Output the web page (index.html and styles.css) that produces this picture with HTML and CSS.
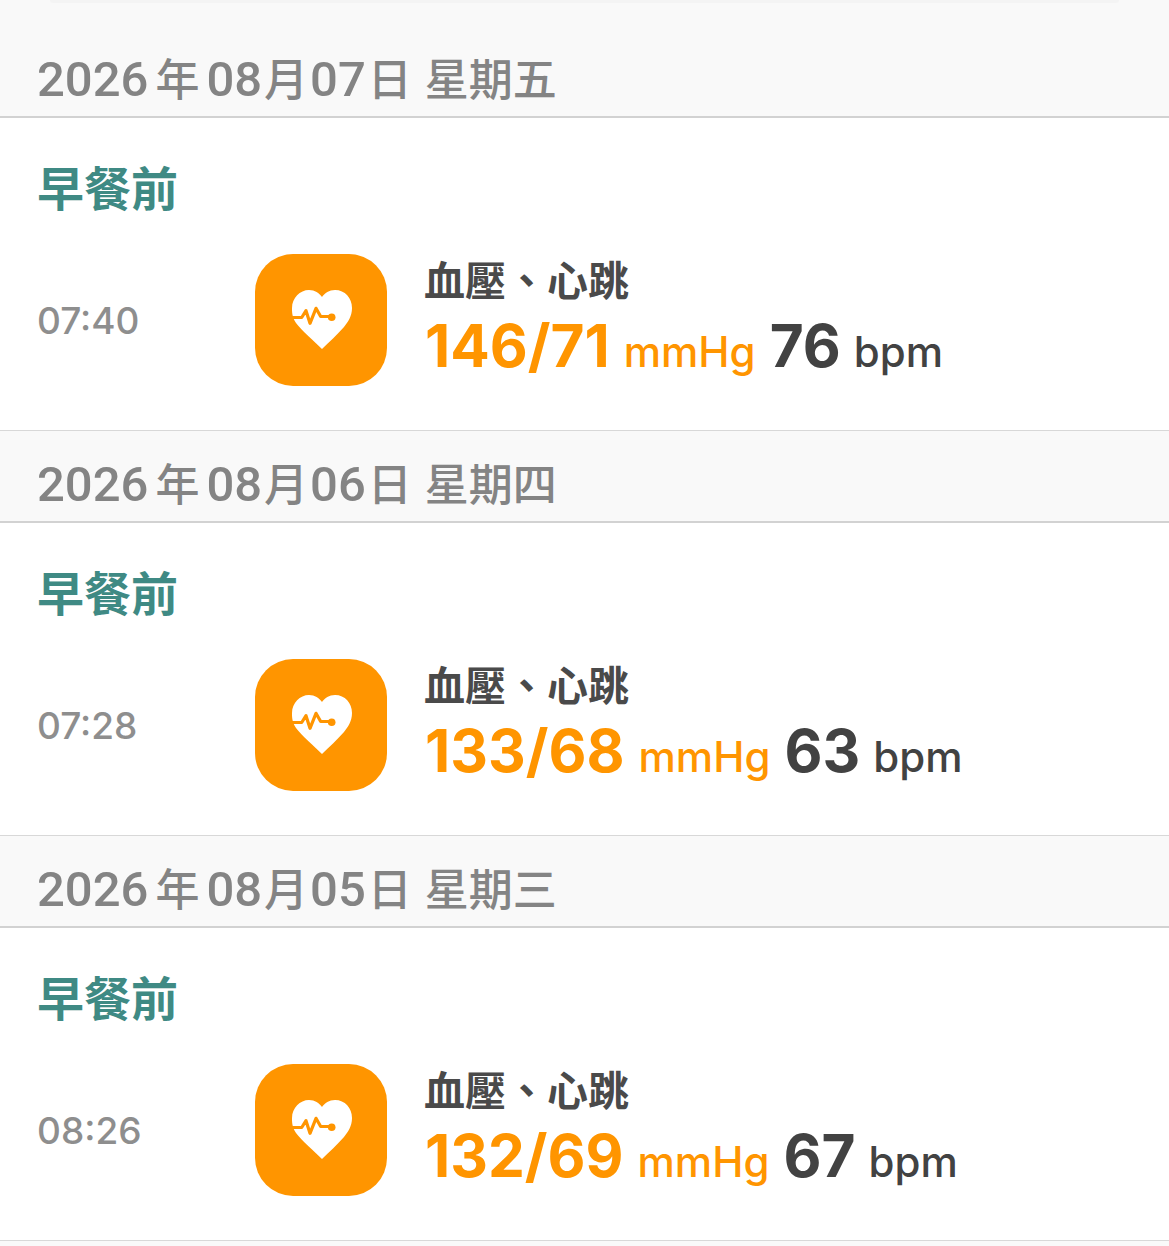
FILE: index.html
```html
<!DOCTYPE html>
<html lang="zh-Hant">
<head>
    <meta charset="UTF-8">
    <title>血壓、心跳</title>
    <link rel="stylesheet" href="styles.css">
</head>
<body>
    <svg class="sprite" width="0" height="0">
        <symbol id="heart" viewBox="0 0 132 132">
            <path fill="#fff" d="M67 95C60 88 46 76 41 69C37 63 37 58 37 54C37 44 45 36 54 36C60 36 64 39 67 43C70 39 74 36 80 36C90 36 97 44 97 54C97 62 93 68 89 73C82 81 74 88 67 95Z"/>
            <path fill="none" stroke="#ff9500" stroke-width="3.2" stroke-linejoin="round" stroke-linecap="round" d="M36 63.5H46.7L51 56.7L55 69.3L61 54.3L65.7 62.5H75"/>
            <circle fill="#ff9500" cx="76.7" cy="63.3" r="3.8"/>
        </symbol>
    </svg>

    <div class="date first">2026<span class="year">年</span>08<span class="cjk">月</span>07<span class="cjk">日</span><span class="week">星期五</span></div>
    <section class="record">
        <h2>早餐前</h2>
        <div class="row">
            <span class="time">07:40</span>
            <svg class="icon"><use href="#heart"/></svg>
            <div class="info">
                <div class="title">血壓、心跳</div>
                <div class="values"><b class="bp">146/71</b><span class="unit bp">mmHg</span><b>76</b><span class="unit">bpm</span></div>
            </div>
        </div>
    </section>

    <div class="date">2026<span class="year">年</span>08<span class="cjk">月</span>06<span class="cjk">日</span><span class="week">星期四</span></div>
    <section class="record">
        <h2>早餐前</h2>
        <div class="row">
            <span class="time">07:28</span>
            <svg class="icon"><use href="#heart"/></svg>
            <div class="info">
                <div class="title">血壓、心跳</div>
                <div class="values"><b class="bp">133/68</b><span class="unit bp">mmHg</span><b>63</b><span class="unit">bpm</span></div>
            </div>
        </div>
    </section>

    <div class="date">2026<span class="year">年</span>08<span class="cjk">月</span>05<span class="cjk">日</span><span class="week">星期三</span></div>
    <section class="record">
        <h2>早餐前</h2>
        <div class="row">
            <span class="time">08:26</span>
            <svg class="icon"><use href="#heart"/></svg>
            <div class="info">
                <div class="title">血壓、心跳</div>
                <div class="values"><b class="bp">132/69</b><span class="unit bp">mmHg</span><b>67</b><span class="unit">bpm</span></div>
            </div>
        </div>
    </section>
</body>
</html>
```

FILE: styles.css
```css
body {
    margin: 0;
    background-color: #f9f9f9;
    font-family: "Inter", "Noto Sans CJK TC", sans-serif;
    overflow: hidden;
}
.sprite {
    position: absolute;
}
.date {
    background-color: #f9f9f9;
    border-bottom: 2px solid #d2d2d2;
    color: #848484;
    font-family: "Roboto", "Noto Sans CJK TC", sans-serif;
    font-size: 49px;
    font-weight: 500;
    line-height: 50px;
    height: 50px;
    padding: 29px 0 11px 37px;
    white-space: nowrap;
}
.date.first {
    height: 105px;
    padding-top: 0;
}
/* thin edge of whatever scrolled off above the list */
.date.first::before {
    content: "";
    display: block;
    height: 3px;
    margin: 0 50px 52px 13px;
    background-color: #f4f4f4;
    border-radius: 0 0 3px 3px;
}
.year, .cjk, .week {
    font-size: 44px;
}
.year {
    margin: 0 7px 0 7px;
}
.cjk {
    margin: 0 2px;
}
.week {
    margin-left: 11px;
}
.record {
    background-color: #fff;
    border-bottom: 1px solid #d8d8d8;
    height: 313px;
    box-sizing: border-box;
}
h2 {
    margin: 0;
    padding: 44px 0 0 37px;
    color: #3f8a84;
    font-size: 47px;
    line-height: 54px;
    font-weight: 700;
}
.row {
    display: flex;
    align-items: center;
    margin-top: 35px;
    padding-left: 37px;
}
.time {
    width: 218px;
    color: #8e8e8e;
    font-size: 37px;
    font-weight: 500;
}
.icon {
    width: 132px;
    height: 132px;
    background-color: #ff9500;
    border-radius: 38px;
    margin-right: 38px;
}
.info {
    align-self: flex-start;
    padding-top: 8px;
}
.title {
    color: #4a4a4a;
    font-size: 41px;
    line-height: 44px;
    font-weight: 700;
    margin-left: -1px;
}
.values {
    display: flex;
    align-items: baseline;
    gap: 14px;
    color: #424242;
    line-height: 74px;
    padding-top: 6px;
    white-space: nowrap;
}
.values b {
    font-size: 58.5px;
    font-weight: 700;
}
.unit {
    font-size: 42px;
    font-weight: 500;
}
.unit:last-child {
    margin-left: -1px;
}
.bp {
    color: #ff9500;
}
```
